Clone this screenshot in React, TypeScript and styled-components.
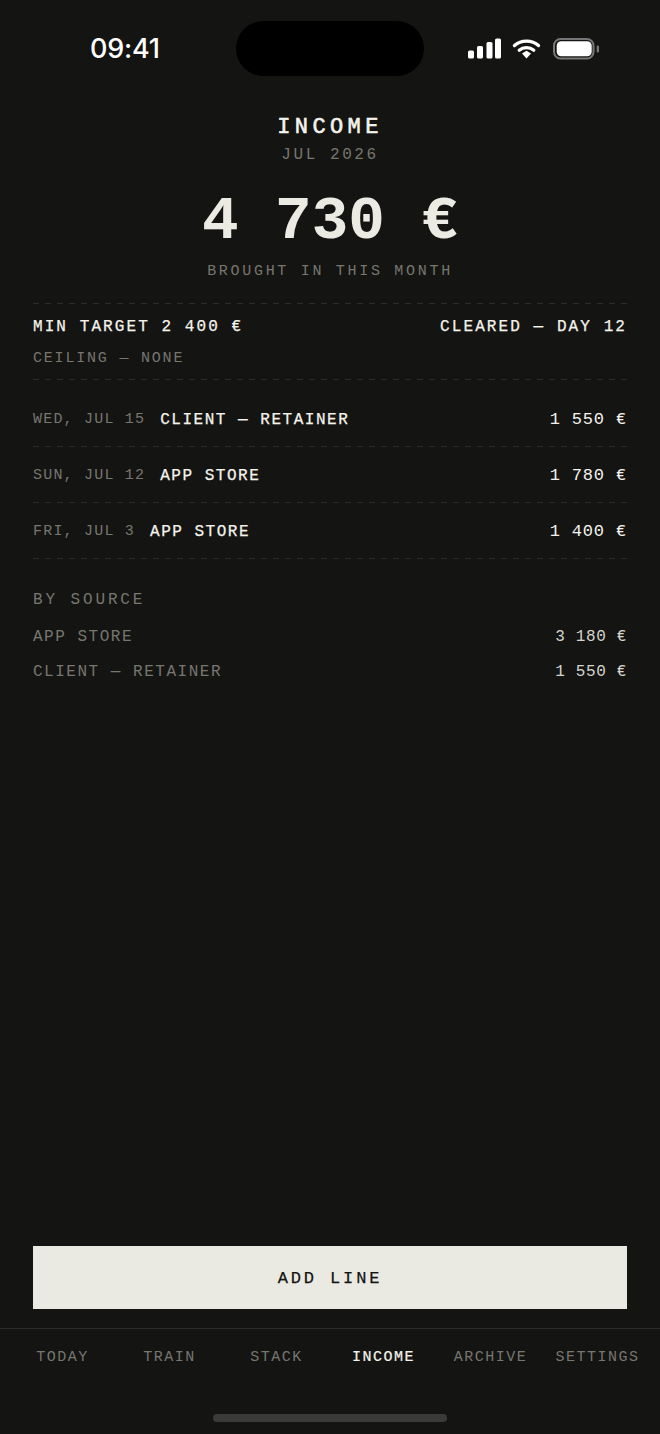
import React from 'react';
import styled, { createGlobalStyle } from 'styled-components';

const BG = '#141412';
const INK = '#ecebe3';
const WHITE = '#f4f3ec';
const MUTED = '#77766f';
const LINE = '#2b2b28';
const MONO = '"Liberation Mono", "DejaVu Sans Mono", monospace';
const DASH = `repeating-linear-gradient(90deg, ${LINE} 0 6px, transparent 6px 12px)`;

const Global = createGlobalStyle`
  html, body { margin: 0; padding: 0; background: ${BG}; }
  * { box-sizing: border-box; }
`;

const Screen = styled.div`
  width: 660px;
  height: 1434px;
  display: flex;
  flex-direction: column;
  background: ${BG};
  font-family: ${MONO};
  overflow: hidden;
`;

const StatusBar = styled.div`
  height: 114px;
  flex: none;
  padding-top: 21px;
  display: grid;
  grid-template-columns: 1fr 188px 1fr;
  align-items: start;
`;

const Clock = styled.div`
  padding-left: 90px;
  height: 55px;
  line-height: 55px;
  font-family: Inter, "Liberation Sans", sans-serif;
  font-size: 27px;
  font-weight: 500;
  color: #fff;
  letter-spacing: -0.2px;
  white-space: nowrap;
`;

const Island = styled.div`
  height: 55px;
  border-radius: 28px;
  background: #000;
`;

const StatusIcons = styled.div`
  height: 55px;
  padding-right: 61px;
  display: flex;
  align-items: center;
  justify-content: flex-end;
`;

const Header = styled.header`
  flex: none;
  display: flex;
  flex-direction: column;
  align-items: center;
`;

const Title = styled.div`
  font-size: 22px;
  line-height: 28px;
  letter-spacing: 0.2em;
  -webkit-text-stroke: 0.6px ${WHITE};
  color: ${WHITE};
`;

const Period = styled.div`
  margin-top: 3px;
  font-size: 16px;
  line-height: 20px;
  letter-spacing: 0.16em;
  color: ${MUTED};
`;

const Total = styled.div`
  margin-top: 22px;
  font-size: 61px;
  line-height: 70px;
  font-weight: 700;
  color: ${INK};
`;

const Caption = styled.div`
  margin-top: 5px;
  font-size: 15px;
  line-height: 20px;
  letter-spacing: 0.18em;
  color: ${MUTED};
`;

const Body = styled.main`
  flex: 1;
  padding: 21px 33px 0;
`;

const Summary = styled.section`
  padding: 14px 0 11px;
  background: ${DASH} top / 100% 1px no-repeat, ${DASH} bottom / 100% 1px no-repeat;
`;

const SummaryRow = styled.div`
  display: flex;
  justify-content: space-between;
  font-size: 16px;
  line-height: 20px;
  letter-spacing: 0.13em;
  -webkit-text-stroke: 0.25px ${WHITE};
  color: ${WHITE};
`;

const Ceiling = styled.div`
  margin-top: 12px;
  font-size: 15px;
  line-height: 20px;
  letter-spacing: 0.12em;
  color: ${MUTED};
`;

const Entries = styled.section`
  margin-top: 11px;
`;

const Entry = styled.div`
  height: 56px;
  padding-top: 1px;
  display: flex;
  align-items: center;
  background: ${DASH} bottom / 100% 1px no-repeat;
`;

const EntryDate = styled.span`
  font-size: 15px;
  letter-spacing: 0.08em;
  color: ${MUTED};
  margin-right: 15px;
`;

const EntryName = styled.span`
  flex: 1;
  font-size: 16px;
  letter-spacing: 0.095em;
  -webkit-text-stroke: 0.25px ${WHITE};
  color: ${WHITE};
`;

const EntryAmount = styled.span`
  font-size: 17px;
  letter-spacing: 0.05em;
  color: ${WHITE};
`;

const SectionLabel = styled.div`
  margin-top: 31px;
  font-size: 16px;
  line-height: 20px;
  letter-spacing: 0.18em;
  color: ${MUTED};
`;

const SourceList = styled.div`
  margin-top: 9px;
  display: flex;
  flex-direction: column;
`;

const SourceRow = styled.div`
  height: 35px;
  display: flex;
  align-items: center;
  justify-content: space-between;
`;

const SourceName = styled.span`
  font-size: 16px;
  letter-spacing: 0.095em;
  color: ${MUTED};
`;

const SourceAmount = styled.span`
  font-size: 16px;
  letter-spacing: 0.04em;
  color: #d6d5ce;
`;

const AddBar = styled.div`
  flex: none;
  padding: 0 33px 19px;
`;

const AddButton = styled.button`
  display: block;
  width: 100%;
  height: 63px;
  padding: 2px 0 0;
  border: 0;
  border-radius: 0;
  background: #ebeae2;
  color: ${BG};
  font-family: ${MONO};
  font-size: 17px;
  letter-spacing: 0.17em;
  -webkit-text-stroke: 0.25px ${BG};
`;

const TabBar = styled.nav`
  flex: none;
  height: 106px;
  border-top: 1px solid #2c2c2a;
  padding: 0 9px;
  position: relative;
  display: grid;
  grid-template-columns: repeat(6, 1fr);
  align-items: start;
`;

const Tab = styled.div<{ $active?: boolean }>`
  margin-top: 19px;
  text-align: center;
  font-size: 15px;
  line-height: 20px;
  letter-spacing: 0.1em;
  white-space: nowrap;
  color: ${(p) => (p.$active ? WHITE : MUTED)};
  -webkit-text-stroke: ${(p) => (p.$active ? `0.2px ${WHITE}` : '0')};
`;

const HomeIndicator = styled.div`
  position: absolute;
  left: 213px;
  top: 85px;
  width: 234px;
  height: 8px;
  border-radius: 4px;
  background: #3a3a38;
`;

const StatusGlyphs = () => (
  <svg width="132" height="24" viewBox="0 0 132 24" fill="none">
    <rect x="1" y="13.5" width="6" height="8" rx="1.5" fill="#fff" />
    <rect x="10" y="9" width="6" height="12.5" rx="1.5" fill="#fff" />
    <rect x="19.5" y="5" width="6" height="16.5" rx="1.5" fill="#fff" />
    <rect x="28" y="1.5" width="6" height="20" rx="1.5" fill="#fff" />
    <path d="M47.5 8.5C54 2.6 65 2.6 71.5 8.5" stroke="#fff" strokeWidth="3.4" strokeLinecap="round" />
    <path d="M52.2 13.2C56.2 9.8 62.8 9.8 66.8 13.2" stroke="#fff" strokeWidth="3.2" strokeLinecap="round" />
    <path d="M55 16.6L59.5 13.8L64 16.6L59.5 21.5Z" fill="#fff" />
    <rect x="87" y="2" width="39.5" height="19.5" rx="6.5" stroke="#77777a" strokeWidth="2" />
    <rect x="89.7" y="4.3" width="35" height="15" rx="4.5" fill="#fff" />
    <rect x="129.7" y="8.5" width="2.3" height="7" rx="1.1" fill="#77777a" />
  </svg>
);

const entries = [
  { date: 'WED, JUL 15', name: 'CLIENT — RETAINER', amount: '1 550 €' },
  { date: 'SUN, JUL 12', name: 'APP STORE', amount: '1 780 €' },
  { date: 'FRI, JUL 3', name: 'APP STORE', amount: '1 400 €' },
];

const sources = [
  { name: 'APP STORE', amount: '3 180 €' },
  { name: 'CLIENT — RETAINER', amount: '1 550 €' },
];

const tabs = ['TODAY', 'TRAIN', 'STACK', 'INCOME', 'ARCHIVE', 'SETTINGS'];

const App = () => (
  <Screen>
    <Global />
    <StatusBar>
      <Clock>09:41</Clock>
      <Island />
      <StatusIcons>
        <StatusGlyphs />
      </StatusIcons>
    </StatusBar>
    <Header>
      <Title>INCOME</Title>
      <Period>JUL 2026</Period>
      <Total>4 730 €</Total>
      <Caption>BROUGHT IN THIS MONTH</Caption>
    </Header>
    <Body>
      <Summary>
        <SummaryRow>
          <span>MIN TARGET 2 400 €</span>
          <span>CLEARED — DAY 12</span>
        </SummaryRow>
        <Ceiling>CEILING — NONE</Ceiling>
      </Summary>
      <Entries>
        {entries.map((e) => (
          <Entry key={e.date}>
            <EntryDate>{e.date}</EntryDate>
            <EntryName>{e.name}</EntryName>
            <EntryAmount>{e.amount}</EntryAmount>
          </Entry>
        ))}
      </Entries>
      <SectionLabel>BY SOURCE</SectionLabel>
      <SourceList>
        {sources.map((s) => (
          <SourceRow key={s.name}>
            <SourceName>{s.name}</SourceName>
            <SourceAmount>{s.amount}</SourceAmount>
          </SourceRow>
        ))}
      </SourceList>
    </Body>
    <AddBar>
      <AddButton>ADD LINE</AddButton>
    </AddBar>
    <TabBar>
      {tabs.map((t) => (
        <Tab key={t} $active={t === 'INCOME'}>
          {t}
        </Tab>
      ))}
      <HomeIndicator />
    </TabBar>
  </Screen>
);

export default App;
